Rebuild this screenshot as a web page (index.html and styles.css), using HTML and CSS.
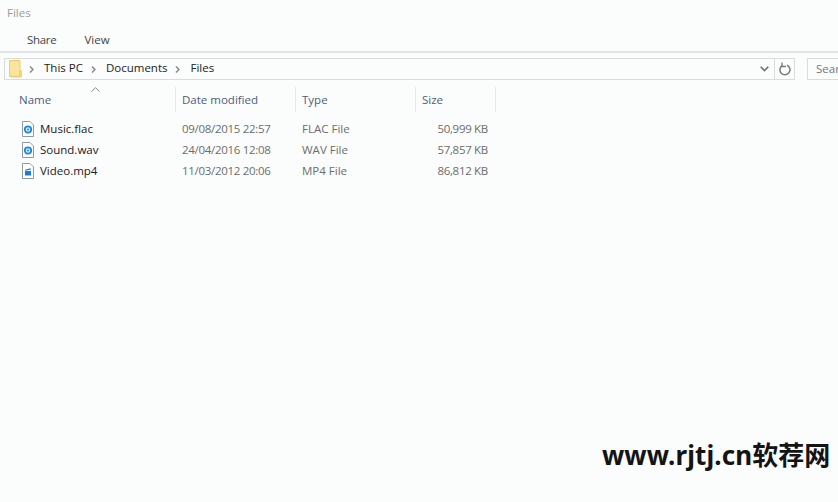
FILE: index.html
```html
<!DOCTYPE html>
<html lang="en">
<head>
<meta charset="utf-8">
<title>Files</title>
<link rel="stylesheet" href="styles.css">
</head>
<body>
<div class="window">
  <div class="title">Files</div>
  <div class="tabs"><span class="tab share">Share</span><span class="tab">View</span></div>
  <div class="navrow">
    <div class="address">
      <svg class="folder" width="13" height="18" viewBox="0 0 13 18"><path d="M.5 .5h10.500v16H.5z" fill="#fbe59c" stroke="#eccd6f"/><path d="M10.500 10.500h2v6.500H2v-.8h8.500z" fill="#f6d77f" stroke="#eccd6f" stroke-width=".8"/></svg>
      <svg class="crumb-sep" width="5" height="7" viewBox="0 0 5 7"><path d="M1 .5 4 3.500 1 6.500" fill="none" stroke="#8a8a8a" stroke-width="1.500"/></svg>
      <span class="crumb">This PC</span>
      <svg class="crumb-sep" width="5" height="7" viewBox="0 0 5 7"><path d="M1 .5 4 3.500 1 6.500" fill="none" stroke="#8a8a8a" stroke-width="1.500"/></svg>
      <span class="crumb">Documents</span>
      <svg class="crumb-sep" width="5" height="7" viewBox="0 0 5 7"><path d="M1 .5 4 3.500 1 6.500" fill="none" stroke="#8a8a8a" stroke-width="1.500"/></svg>
      <span class="crumb">Files</span>
      <svg class="chevron" width="9" height="6" viewBox="0 0 9 6"><path d="M.7 .8 4.500 4.600 8.300 .8" fill="none" stroke="#6f6f6f" stroke-width="1.600"/></svg>
      <div class="refresh">
        <svg width="12" height="14" viewBox="0 0 12 14"><path d="M3.300 3.500A5 5 0 1 0 8 3.200" fill="none" stroke="#7a7a7a" stroke-width="1.500"/><path d="M3 .5V4.500H7" fill="none" stroke="#7a7a7a" stroke-width="1.300"/></svg>
      </div>
    </div>
    <div class="search">Search</div>
  </div>
  <div class="grid header">
    <div class="col name">Name
      <svg class="sort-caret" width="9" height="5" viewBox="0 0 9 5"><path d="M.5 4.500 4.500 .7 8.500 4.500" fill="none" stroke="#8a8a8a"/></svg>
    </div>
    <div class="col date">Date modified</div>
    <div class="col type">Type</div>
    <div class="col size">Size</div>
  </div>
  <div class="rows">
    <div class="grid row">
      <div class="cell name">
        <svg class="icon" width="12" height="16" viewBox="0 0 12 16"><path d="M.5 .5h7.500l3.500 3.500v11.500H.5z" fill="#fff" stroke="#8f9aa8"/><circle cx="6" cy="8.500" r="3.200" fill="#d5ecfb" stroke="#1e88d8" stroke-width="1.800"/><circle cx="6" cy="8.500" r="1" fill="#1e88d8"/></svg>
        <span class="fname">Music.flac</span>
      </div>
      <div class="cell date">09/08/2015 22:57</div>
      <div class="cell type">FLAC File</div>
      <div class="cell size">50,999 KB</div>
    </div>
    <div class="grid row">
      <div class="cell name">
        <svg class="icon" width="12" height="16" viewBox="0 0 12 16"><path d="M.5 .5h7.500l3.500 3.500v11.500H.5z" fill="#fff" stroke="#8f9aa8"/><circle cx="6" cy="8.500" r="3.200" fill="#d5ecfb" stroke="#1e88d8" stroke-width="1.800"/><circle cx="6" cy="8.500" r="1" fill="#1e88d8"/></svg>
        <span class="fname">Sound.wav</span>
      </div>
      <div class="cell date">24/04/2016 12:08</div>
      <div class="cell type">WAV File</div>
      <div class="cell size">57,857 KB</div>
    </div>
    <div class="grid row">
      <div class="cell name">
        <svg class="icon" width="12" height="16" viewBox="0 0 12 16"><path d="M.5 .5h7.500l3.500 3.500v11.500H.5z" fill="#fff" stroke="#8f9aa8"/><path d="M3 8h6v4.500H3z" fill="#1580d8"/><path d="M3 6.800 8.600 5.300 9 6.500 3.300 7.800z" fill="#1580d8"/></svg>
        <span class="fname">Video.mp4</span>
      </div>
      <div class="cell date">11/03/2012 20:06</div>
      <div class="cell type">MP4 File</div>
      <div class="cell size">86,812 KB</div>
    </div>
  </div>
  <div class="watermark">www.rjtj.cn软荐网</div>
</div>
</body>
</html>
```

FILE: styles.css
```css
html, body {
  margin: 0;
  padding: 0;
  width: 838px;
  height: 502px;
  overflow: hidden;
}
.window {
  position: relative;
  width: 838px;
  height: 502px;
  overflow: hidden;
  background: #fbfcfc;
  font-family: "Open Sans", "Noto Sans", sans-serif;
  font-size: 11.500px;
  color: #1a1a1a;
}
.title {
  height: 27px;
  padding-left: 7px;
  line-height: 26px;
  color: #9b9b9b;
}
.tabs {
  display: flex;
  height: 24px;
  border-bottom: 2px solid #e4e6e6;
  padding-left: 27px;
  gap: 28px;
  line-height: 26px;
  color: #444;
}
.share {
  letter-spacing: -0.3px;
}
.navrow {
  display: flex;
  gap: 12px;
  padding: 5px 0 0 4px;
}
.address {
  display: flex;
  align-items: center;
  width: 789px;
  height: 20px;
  border: 1px solid #d9dcdc;
  flex: none;
}
.folder {
  margin: 0 -1px 0 4px;
}
.crumb-sep { margin: 0 10px 0 8px; }
.crumb {
  padding-bottom: 4px;
  color: #222;
}
.chevron { margin-left: auto; margin-right: 5px; }
.refresh {
  display: flex;
  align-items: center;
  justify-content: center;
  width: 19px;
  height: 20px;
  border-left: 1px solid #d9dcdc;
}
.search {
  flex: none;
  width: 60px;
  height: 20px;
  border: 1px solid #d9dcdc;
  padding-left: 8px;
  line-height: 19px;
  color: #777;
}
.grid {
  display: grid;
  grid-template-columns: 176px 120px 120px 80px;
}
.header {
  height: 25px;
  margin-top: 7px;
  color: #4c607a;
}
.col {
  padding-left: 6px;
  line-height: 25px;
  border-right: 1px solid #e6e8e8;
}
.col.name {
  position: relative;
  padding-left: 19px;
}
.sort-caret {
  position: absolute;
  left: 91px;
  top: 0;
}
.rows {
  padding-top: 6px;
}
.row {
  height: 21px;
  line-height: 21px;
  color: #6d6d6d;
}
.cell { padding-left: 6px; }
.cell.date,
.cell.size {
  letter-spacing: -0.3px;
}
.cell.name {
  display: flex;
  align-items: center;
  padding-left: 22px;
  gap: 6px;
  color: #1a1a1a;
}
.cell.size {
  padding: 0 8px 0 0;
  text-align: right;
}
.icon { flex: none; }
.watermark {
  position: absolute;
  left: 602px;
  top: 437px;
  font-family: "Noto Sans", "Noto Sans CJK SC", sans-serif;
  font-size: 26px;
  font-weight: 700;
  letter-spacing: 0.1px;
  line-height: 36px;
  color: #141414;
  white-space: nowrap;
}
```
